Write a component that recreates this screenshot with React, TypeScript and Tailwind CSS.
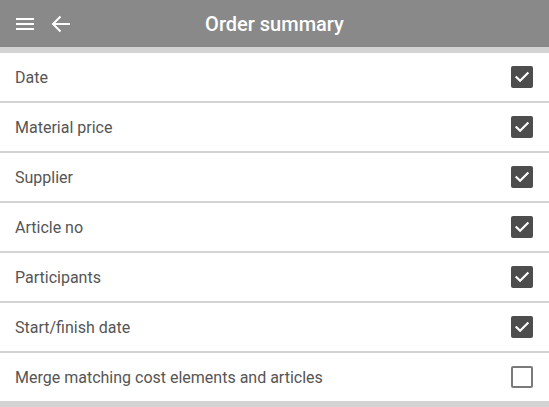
import { useState } from 'react';

const initialRows = [
  { label: 'Date', checked: true },
  { label: 'Material price', checked: true },
  { label: 'Supplier', checked: true },
  { label: 'Article no', checked: true },
  { label: 'Participants', checked: true },
  { label: 'Start/finish date', checked: true },
  { label: 'Merge matching cost elements and articles', checked: false },
];

function Checkbox({ checked }: { checked: boolean }) {
  if (!checked) {
    return <div className="h-[22px] w-[22px] rounded-[2px] border-2 border-[#7a7a7a] bg-white" />;
  }
  return (
    <div className="flex h-[22px] w-[22px] items-center justify-center rounded-[2px] bg-[#4d4d4d]">
      <svg width="16" height="16" viewBox="0 0 16 16" fill="none">
        <path d="M2.5 8.2l3.6 3.6L13.6 4.3" stroke="white" strokeWidth="2.2" strokeLinecap="square" />
      </svg>
    </div>
  );
}

export default function App() {
  const [rows, setRows] = useState(initialRows);

  const toggle = (i: number) =>
    setRows(r => r.map((row, j) => (j === i ? { ...row, checked: !row.checked } : row)));

  return (
    <div className="flex h-[407px] w-[549px] flex-col bg-[#d3d3d3] font-['Roboto',sans-serif]">
      <header className="relative flex h-[47px] shrink-0 items-center bg-[#898989] px-[12px]">
        <svg width="24" height="24" viewBox="0 0 24 24" className="ml-[1px]">
          <path d="M3 18h18v-2H3v2zm0-5h18v-2H3v2zm0-7v2h18V6H3z" fill="white" />
        </svg>
        <svg width="20" height="18" viewBox="0 0 20 18" fill="none" className="ml-[14px]">
          <path d="M19 9H2M9.5 1.5L2 9l7.5 7.5" stroke="white" strokeWidth="2" />
        </svg>
        <h1 className="pointer-events-none absolute inset-x-0 text-center text-[20px] font-medium text-white">
          Order summary
        </h1>
      </header>

      <div className="flex flex-col gap-[2px] pt-[6px]">
        {rows.map((row, i) => (
          <div
            key={row.label}
            onClick={() => toggle(i)}
            className="flex h-[48px] cursor-pointer items-center justify-between bg-white pl-[15px] pr-[16px]"
          >
            <span className="pt-[2px] text-[16px] text-[#555555]">{row.label}</span>
            <Checkbox checked={row.checked} />
          </div>
        ))}
      </div>
    </div>
  );
}
